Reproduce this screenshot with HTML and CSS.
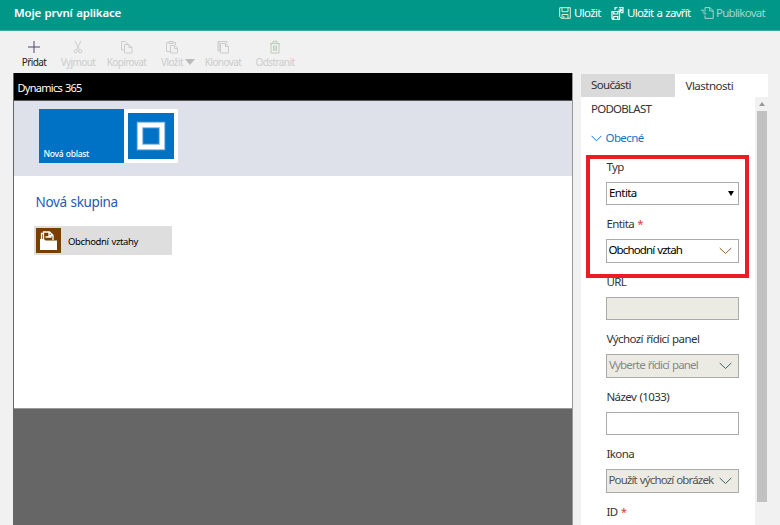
FILE: index.html
```html
<!DOCTYPE html>
<html lang="cs">
<head>
<meta charset="utf-8">
<title>Moje první aplikace</title>
<link rel="stylesheet" href="styles.css">
</head>
<body>
<header class="topbar">
  <h1 class="app-title">Moje první aplikace</h1>
  <nav class="actions">
    <a class="action save"><svg width="12" height="12" viewBox="0 0 12 12"><path d="M.7.7h10.6v10.6H2.2L.7 9.8zM3 .7v4h6v-4M3 11.3V7.5h6v3.8M4.800 9v2"/></svg><span>Uložit</span></a>
    <a class="action save-close"><svg width="13" height="13" viewBox="0 0 13 13"><path d="M1 4.500h7.500v8H2L1 11.500zM2.700 4.500v2.500h4V4.500M2.800 12.500V9.500h4v3M4 3V.7h2.500M8 .7h4v5H9.700M7.500 3.200h3M9.200 1.900l1.500 1.300-1.500 1.400"/></svg><span>Uložit a zavřít</span></a>
    <a class="action publish"><svg width="13" height="12" viewBox="0 0 13 12"><path d="M4 4V.6h5l3.200 3.200v7.600H4V8.500M8.700.6V4h3.500M0 3.200h3M1.500 5h3M2.500 6.800h3"/></svg><span>Publikovat</span></a>
  </nav>
</header>
<div class="toolbar">
  <div class="tool add"><svg width="14" height="14" viewBox="0 0 14 14"><path d="M7 1v12M1 7h12"/></svg><span>Přidat</span></div>
  <div class="tool cut"><svg width="14" height="14" viewBox="0 0 14 14"><path d="M4 1l4.500 9M10 1L5.500 10"/><circle cx="4.700" cy="11.300" r="1.600"/><circle cx="9.300" cy="11.300" r="1.600"/></svg><span>Vyjmout</span></div>
  <div class="tool copy"><svg width="14" height="14" viewBox="0 0 14 14"><path d="M4.500 10H1.500V1.500h4L8 4M4.500 4.500h4.500l3 3v5.500H4.500zM9 4.500v3h3"/></svg><span>Kopírovat</span></div>
  <div class="tool paste"><svg width="14" height="14" viewBox="0 0 14 14"><path d="M5 11.500H1.500v-9H4M8 2.500h2.500V5M4 3.500v-2h4v2zM5.500 5.500H10l2.500 2.500v5h-7zM9.500 5.500v3h3"/></svg><span>Vložit</span><i class="caret"></i></div>
  <div class="tool clone"><svg width="14" height="14" viewBox="0 0 14 14"><path d="M3.500 11H2V1.500h9V3M4.500 3.500h5l3 3V13h-8zM9.500 3.500v3h3M3.200 2v9"/></svg><span>Klonovat</span></div>
  <div class="tool delete"><svg width="14" height="14" viewBox="0 0 14 14"><path d="M2 3.500h10M5 3.300v-2h4v2M3 3.500V13h8V3.500M5.500 5.500v5.500M7 5.500v5.500M8.500 5.500v5.500"/></svg><span>Odstranit</span></div>
</div>
<main class="workspace">
  <section class="canvas">
    <div class="brand"><span>Dynamics 365</span></div>
    <div class="areas">
      <div class="area"><span>Nová oblast</span></div>
      <div class="area-icon"><svg width="46" height="46" viewBox="0 0 46 46"><path class="glow" d="M12 12h22v22H12z"/><path class="ring" d="M12 12h22v22H12z"/></svg></div>
    </div>
    <div class="group">
      <h2><span>Nová skupina</span></h2>
      <div class="subarea"><svg width="25" height="25" viewBox="0 0 25 25"><path fill="#774000" d="M0 0h25v25H0z"/><path fill="none" stroke="#fff" stroke-width="1.300" d="M5.500 11V5.500h2M7.500 11V4h6l3.500 3.200V12M13 4v3.500h4M9.500 9h6"/><path fill="#fff" d="M4 11h4l1.500 1.500H21V22H4z"/></svg><span>Obchodní vztahy</span></div>
    </div>
  </section>
  <aside class="panel">
    <div class="tabs"><div class="tab"><span>Součásti</span></div><div class="tab active"><span>Vlastnosti</span></div></div>
    <div class="panel-body">
      <div class="props">
        <div class="kind"><span>PODOBLAST</span></div>
        <div class="section"><svg width="11" height="7" viewBox="0 0 11 7"><path d="M.5.800l5 5 5-5"/></svg><span>Obecné</span></div>
        <div class="field"><label>Typ</label><div class="input"><span>Entita</span><i class="arrow"></i></div></div>
        <div class="field"><label>Entita <b>*</b></label><div class="input lookup"><span>Obchodní vztah</span><svg class="chev gold" width="13" height="8" viewBox="0 0 13 8"><path d="M.7 1l5.800 5.500L12.300 1"/></svg></div></div>
        <div class="field"><label>URL</label><div class="input off"></div></div>
        <div class="field"><label>Výchozí řídicí panel</label><div class="input lookup off hint"><span>Vyberte řídicí panel</span><svg class="chev" width="13" height="8" viewBox="0 0 13 8"><path d="M.7 1l5.800 5.500L12.300 1"/></svg></div></div>
        <div class="field"><label>Název (1033)</label><div class="input"></div></div>
        <div class="field"><label>Ikona</label><div class="input lookup off"><span>Použít výchozí obrázek</span><svg class="chev" width="13" height="8" viewBox="0 0 13 8"><path d="M.7 1l5.800 5.500L12.300 1"/></svg></div></div>
        <div class="field"><label>ID <b>*</b></label></div>
        <div class="highlight"></div>
      </div>
      <div class="scrollbar"><i class="up"></i><div class="thumb"></div></div>
    </div>
  </aside>
</main>
</body>
</html>
```
FILE: styles.css
```css
* { box-sizing: border-box; }
body {
  margin: 0;
  width: 780px;
  height: 525px;
  overflow: hidden;
  display: flex;
  flex-direction: column;
  background: #f1f1f1;
  color: #333;
  font: 11.500px/16px "Noto Sans", "Open Sans", sans-serif;
  letter-spacing: -.6px;
  word-spacing: .8px;
  white-space: nowrap;
}
h1, h2 { margin: 0; }
svg { display: block; flex: none; fill: none; stroke: currentColor; }

.topbar {
  flex: none;
  height: 31px;
  padding: 0 14px 4px;
  display: flex;
  align-items: center;
  background: #009688;
  border-bottom: 1px solid #38aa9f;
  color: #fff;
}
.app-title { font-size: 11.500px; font-weight: 600; line-height: 16px; letter-spacing: -.2px; }
.actions { display: flex; margin-left: auto; }
.action { display: flex; align-items: center; gap: 3px; letter-spacing: -.65px; }
.action.save { width: 52px; }
.action.save svg { color: #e0f0c8; }
.action.save-close { width: 90px; gap: 3px; letter-spacing: -.72px; }
.action.save-close svg { stroke-width: 1.200; }
.action.publish { width: 65px; gap: 2px; color: #a5d5cf; letter-spacing: -.75px; }

.toolbar { flex: none; height: 42px; padding: 9px 0 0 12px; display: flex; }
.tool {
  position: relative;
  display: flex;
  flex-direction: column;
  align-items: center;
  color: #ccc;
  font-size: 10px;
  line-height: 16px;
}
.tool.add { width: 44px; color: #222; }
.tool.add svg { color: #51456f; }
.tool.cut { width: 44px; }
.tool.copy { width: 53px; }
.tool.paste { width: 42px; padding-right: 4px; }
.tool.clone { width: 56px; }
.tool.delete { width: 48px; }
.tool.delete svg { color: #b9cdb9; }
.caret {
  position: absolute;
  right: 0;
  top: 19px;
  border: 5px solid transparent;
  border-top: 6px solid #bbb;
  border-bottom: 0;
}

.workspace { flex: 1; min-height: 0; display: flex; padding: 0 11px 0 13px; }
.canvas {
  width: 560px;
  background: linear-gradient(#fff 335px, #999 335px, #999 336px, #666 336px);
  border-left: 1px solid #666;
  border-right: 1px solid #999;
}
.brand {
  height: 28px;
  padding: 8px 3.500px 6px;
  line-height: 14px;
  background: #000;
  border-bottom: 1px solid #555;
  color: #fff;
  font-size: 11px;
  letter-spacing: -.72px;
}
.areas { height: 75px; padding: 8px 25px; display: flex; background: #dee1ea; }
.area {
  width: 85px;
  height: 54px;
  padding: 0 4.500px 1px;
  display: flex;
  align-items: flex-end;
  background: #0072c6;
  color: #fff;
  font-size: 8.500px;
  font-weight: 500;
  letter-spacing: -.32px;
}
.area-icon { width: 54px; height: 54px; padding: 4px; background: #fff; }
.area-icon svg { background: #0072c6; }
.ring { stroke: #fff; stroke-width: 4.500; }
.glow { stroke: #79b4df; stroke-width: 6.500; }
.group { padding: 17px 20px; }
h2 {
  padding-left: 1.500px;
  font-size: 13.500px;
  line-height: 18px;
  font-weight: 400;
  letter-spacing: -.36px;
  color: #2459b4;
}
.subarea {
  width: 138px;
  height: 29px;
  margin-top: 15px;
  padding-left: 2px;
  display: flex;
  align-items: center;
  gap: 7px;
  background: #dedede;
  color: #000;
  font-size: 9.500px;
  letter-spacing: -.38px;
}
.subarea span { padding-top: 2px; }
.subarea svg { stroke: none; }

.panel { width: 187px; margin-left: 8px; display: flex; flex-direction: column; padding-top: 1px; }
.tabs { flex: none; height: 23px; display: flex; }
.tab { width: 94px; padding: 3px 10px; background: #dadada; letter-spacing: -.65px; }
.tab.active { padding: 4px 11px; background: #fff; letter-spacing: -.5px; }
.panel-body { flex: 1; min-height: 0; display: flex; background: #fff; }
.props { position: relative; width: 174px; padding-left: 25px; overflow: hidden; }
.kind { margin-left: -15px; height: 24px; padding-top: 4px; letter-spacing: -.75px; }
.section {
  margin-left: -15px;
  height: 37px;
  padding-top: 9px;
  display: flex;
  gap: 3.500px;
  color: #1673c9;
}
.section svg { margin-top: 5px; }
.field { height: 57.480px; letter-spacing: -.58px; }
.field label { display: block; height: 24px; padding: 1px 0 0 .400px; }
.field b { color: #e33; font-weight: 400; }
.input {
  width: 133px;
  height: 23px;
  padding: 0 6px 1px 2px;
  display: flex;
  align-items: center;
  justify-content: space-between;
  background: #fff;
  border: 1px solid #aaa;
  color: #000;
}
.input.lookup { height: 24px; padding-left: 1.500px; padding-bottom: 2px; letter-spacing: -.86px; }
.input.off { background: #ebebe4; color: #555; }
.input.hint { color: #888; padding-left: 2px; letter-spacing: -.84px; }
.chev { color: #3d6268; margin-top: 1px; }
.chev.gold { color: #8f6a35; }
.arrow { border: 3px solid transparent; border-top: 5px solid #000; border-bottom: 0; margin-right: -2px; }
.highlight {
  position: absolute;
  left: 5px;
  top: 58px;
  width: 163px;
  height: 123px;
  border: 4px solid #ed1c24;
}
.scrollbar { width: 13px; padding: 0 1px 0 2px; background: #f1f1f1; }
.up { display: block; margin: 5px 0 5px 2px; width: 6px; border: 3px solid transparent; border-bottom: 4px solid #999; border-top: 0; }
.thumb { height: 391px; background: #c1c1c1; }
```
